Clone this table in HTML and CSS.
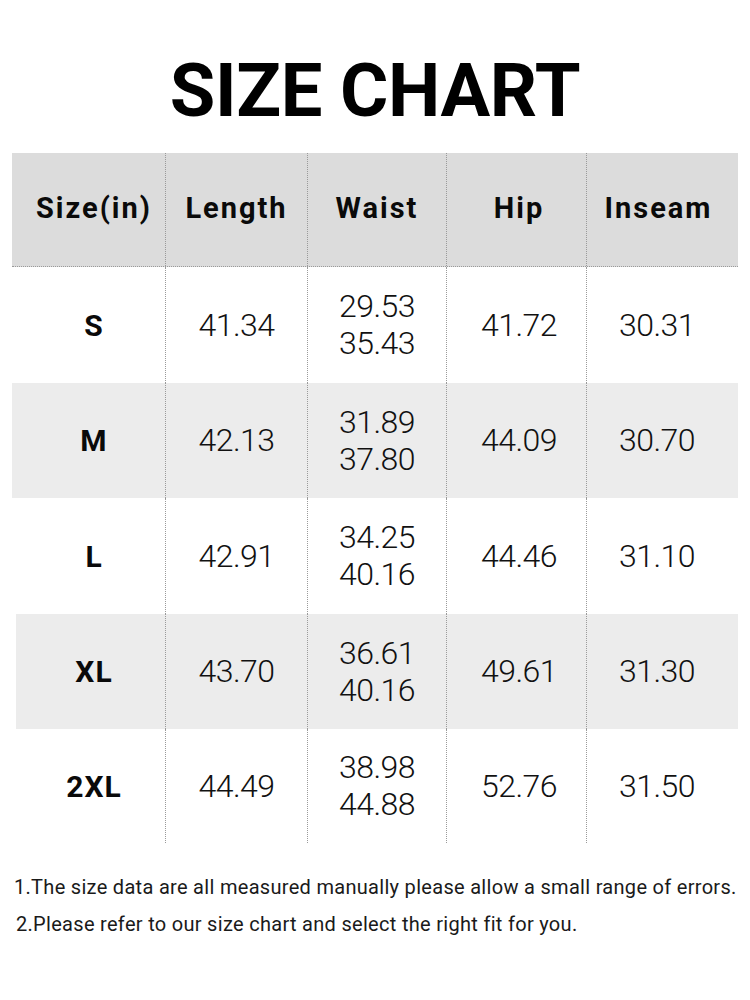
FILE: index.html
```html
<!DOCTYPE html>
<html lang="en">
<head>
<meta charset="utf-8">
<title>Size Chart</title>
<link rel="stylesheet" href="styles.css">
</head>
<body>
<div class="page">
  <h1 class="title">SIZE CHART</h1>
  <div class="chart">
    <div class="row head">
      <div class="cell">Size(in)</div>
      <div class="cell">Length</div>
      <div class="cell">Waist</div>
      <div class="cell">Hip</div>
      <div class="cell">Inseam</div>
    </div>
    <div class="row r1">
      <div class="cell size">S</div>
      <div class="cell">41.34</div>
      <div class="cell two"><span>29.53</span><span>35.43</span></div>
      <div class="cell">41.72</div>
      <div class="cell">30.31</div>
    </div>
    <div class="row r2 alt">
      <div class="cell size">M</div>
      <div class="cell">42.13</div>
      <div class="cell two"><span>31.89</span><span>37.80</span></div>
      <div class="cell">44.09</div>
      <div class="cell">30.70</div>
    </div>
    <div class="row r1">
      <div class="cell size">L</div>
      <div class="cell">42.91</div>
      <div class="cell two"><span>34.25</span><span>40.16</span></div>
      <div class="cell">44.46</div>
      <div class="cell">31.10</div>
    </div>
    <div class="row r2 alt inset">
      <div class="cell size">XL</div>
      <div class="cell">43.70</div>
      <div class="cell two"><span>36.61</span><span>40.16</span></div>
      <div class="cell">49.61</div>
      <div class="cell">31.30</div>
    </div>
    <div class="row r3">
      <div class="cell size">2XL</div>
      <div class="cell">44.49</div>
      <div class="cell two"><span>38.98</span><span>44.88</span></div>
      <div class="cell">52.76</div>
      <div class="cell">31.50</div>
    </div>
  </div>
  <div class="notes">
    <p class="note n1">1.The size data are all measured manually please allow a small range of errors.</p>
    <p class="note n2">2.Please refer to our size chart and select the right fit for you.</p>
  </div>
</div>
</body>
</html>
```

FILE: styles.css
```css
html, body {
  margin: 0;
  padding: 0;
  background: #ffffff;
}

.page {
  width: 750px;
  height: 1000px;
  padding-top: 54px;
  box-sizing: border-box;
  font-family: Roboto, "Liberation Sans", sans-serif;
  color: #111111;
}

.title {
  margin: 0;
  font-size: 74px;
  line-height: 74px;
  font-weight: 700;
  letter-spacing: -0.4px;
  text-align: center;
  color: #000000;
}

.chart {
  margin: 25px 0 0 12px;
  width: 726px;
}

.row {
  display: grid;
  grid-template-columns: 153px 142px 139px 140px 152px;
}

.cell {
  display: flex;
  flex-direction: column;
  align-items: center;
  justify-content: center;
  box-sizing: border-box;
  font-size: 32px;
  font-weight: 300;
  letter-spacing: -0.5px;
  line-height: 37px;
}

.cell + .cell {
  border-left: 1px dotted #9a9a9a;
}

.cell:first-child {
  padding-left: 11px;
}

.cell:nth-child(4) {
  padding-left: 5px;
}

.cell:last-child {
  padding-right: 11px;
}

.head {
  height: 113px;
  background: #dcdcdc;
  border-bottom: 1px dotted #9a9a9a;
}

.head .cell {
  font-size: 29px;
  font-weight: 700;
  letter-spacing: 2px;
  color: #0a0a0a;
  padding-bottom: 2px;
}

.head .cell:last-child {
  padding-right: 8px;
}

.r1 { height: 116px; }
.r2 { height: 115px; }
.r3 { height: 114px; }

.alt {
  background: #ececec;
}

.inset {
  background: linear-gradient(to right, #ffffff 4px, #ececec 4px);
}

.size {
  font-size: 30px;
  font-weight: 700;
  letter-spacing: 1px;
  color: #0a0a0a;
}

.two span {
  display: block;
}

.notes {
  margin-top: 26px;
  padding-left: 14px;
}

.note {
  margin: 0;
  font-size: 20px;
  line-height: 37px;
  font-weight: 400;
  letter-spacing: 0.3px;
  color: #1a1a1a;
}

.n2 {
  padding-left: 2px;
}
```
